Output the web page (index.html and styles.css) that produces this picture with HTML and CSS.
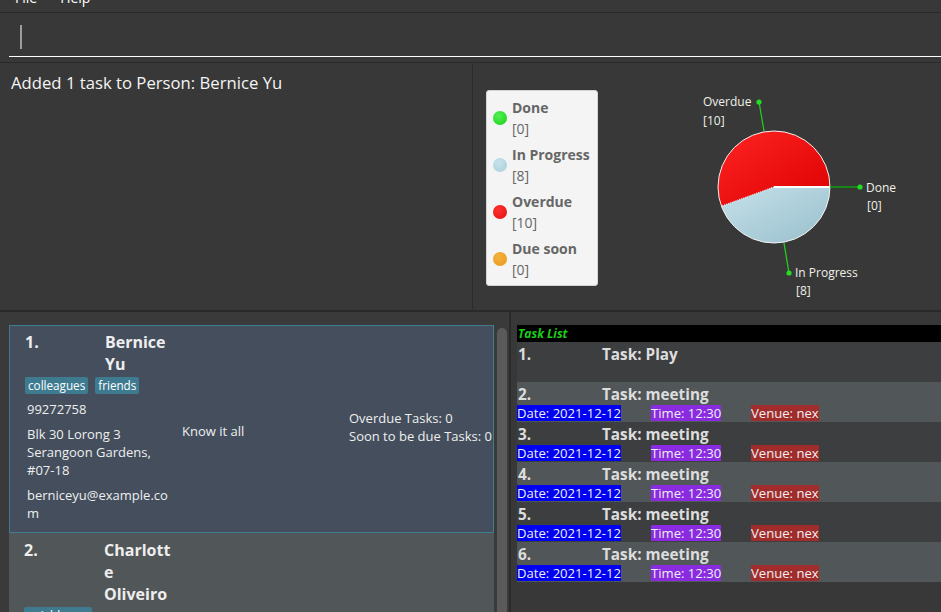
FILE: index.html
```html
<!DOCTYPE html>
<html>
<head>
<meta charset="utf-8">
<title>Address Book</title>
<link rel="stylesheet" href="styles.css">
</head>
<body>
<div class="app">
  <div class="menubar">
    <span class="menu-item">File</span>
    <span class="menu-item">Help</span>
  </div>
  <div class="command">
    <div class="command-field"><span class="caret"></span></div>
  </div>
  <div class="spacer"></div>
  <div class="top">
    <div class="result">Added 1 task to Person: Bernice Yu</div>
    <div class="chart">
      <div class="legend">
        <div class="legend-item">
          <span class="dot dot-done"></span>
          <div class="legend-text"><div class="legend-name">Done</div><div>[0]</div></div>
        </div>
        <div class="legend-item">
          <span class="dot dot-progress"></span>
          <div class="legend-text"><div class="legend-name">In Progress</div><div>[8]</div></div>
        </div>
        <div class="legend-item">
          <span class="dot dot-overdue"></span>
          <div class="legend-text"><div class="legend-name">Overdue</div><div>[10]</div></div>
        </div>
        <div class="legend-item">
          <span class="dot dot-soon"></span>
          <div class="legend-text"><div class="legend-name">Due soon</div><div>[0]</div></div>
        </div>
      </div>
      <svg class="pie" width="343" height="247" viewBox="0 0 343 247">
        <defs>
          <linearGradient id="gRed" x1="0" y1="0" x2="1" y2="1">
            <stop offset="0" stop-color="#ff2424"/>
            <stop offset="1" stop-color="#dc0000"/>
          </linearGradient>
          <linearGradient id="gBlue" x1="0" y1="0" x2="1" y2="1">
            <stop offset="0" stop-color="#c6e1ea"/>
            <stop offset="1" stop-color="#97bfcc"/>
          </linearGradient>
        </defs>
        <path d="M176,124 L232,124 A56,56 0 1,0 123.4,143.2 Z" fill="url(#gRed)"/>
        <path d="M176,124 L123.4,143.2 A56,56 0 0,0 232,124 Z" fill="url(#gBlue)"/>
        <circle cx="176" cy="124" r="56" fill="none" stroke="#f2f2f2" stroke-width="1"/>
        <line x1="176" y1="124" x2="232" y2="124" stroke="#ffffff" stroke-width="2"/>
        <line x1="176" y1="124" x2="123.4" y2="143.2" stroke="#f4f4f4" stroke-width="1.2" stroke-dasharray="1 1"/>
        <line x1="166" y1="68" x2="161" y2="39" stroke="#22cc22" stroke-width="1.3"/>
        <circle cx="161" cy="39" r="2.6" fill="#22dd22"/>
        <line x1="232" y1="124" x2="262" y2="124" stroke="#119911" stroke-width="1.6"/>
        <circle cx="262" cy="124" r="2.6" fill="#22dd22"/>
        <line x1="186" y1="180" x2="191" y2="210" stroke="#22cc22" stroke-width="1.3"/>
        <circle cx="191" cy="210" r="2.6" fill="#22dd22"/>
        <text class="pie-label" x="105" y="43">Overdue</text>
        <text class="pie-label" x="105" y="62">[10]</text>
        <text class="pie-label" x="268" y="129">Done</text>
        <text class="pie-label" x="269" y="147">[0]</text>
        <text class="pie-label" x="197" y="214">In Progress</text>
        <text class="pie-label" x="198" y="232">[8]</text>
      </svg>
    </div>
  </div>
  <div class="bottom">
    <div class="people">
      <div class="person-list">
        <div class="card selected">
          <div class="card-main">
            <div class="card-head">
              <div class="card-index">1.</div>
              <div class="card-name">Bernice Yu</div>
            </div>
            <div class="tags">
              <span class="tag">colleagues</span>
              <span class="tag">friends</span>
            </div>
            <div class="field phone">99272758</div>
            <div class="field">Blk 30 Lorong 3 Serangoon Gardens, #07-18</div>
            <div class="field">berniceyu@example.com</div>
          </div>
          <div class="card-remark">Know it all</div>
          <div class="card-stats">
            <div>Overdue Tasks: 0</div>
            <div>Soon to be due Tasks: 0</div>
          </div>
        </div>
        <div class="card">
          <div class="card-main">
            <div class="card-head">
              <div class="card-index">2.</div>
              <div class="card-name">Charlotte Oliveiro</div>
            </div>
            <div class="tags">
              <span class="tag">neighbours</span>
            </div>
          </div>
        </div>
      </div>
      <div class="scrollbar"><div class="thumb"></div></div>
    </div>
    <div class="tasks">
      <div class="task-header">Task List</div>
      <div class="task-row dark">
        <div class="task-title"><span class="task-index">1.</span><span>Task: Play</span></div>
      </div>
      <div class="task-row light">
        <div class="task-title"><span class="task-index">2.</span><span>Task: meeting</span></div>
        <div class="task-tags"><span class="t-date">Date: 2021-12-12</span><span class="t-time">Time: 12:30</span><span class="t-venue">Venue: nex</span></div>
      </div>
      <div class="task-row dark">
        <div class="task-title"><span class="task-index">3.</span><span>Task: meeting</span></div>
        <div class="task-tags"><span class="t-date">Date: 2021-12-12</span><span class="t-time">Time: 12:30</span><span class="t-venue">Venue: nex</span></div>
      </div>
      <div class="task-row light">
        <div class="task-title"><span class="task-index">4.</span><span>Task: meeting</span></div>
        <div class="task-tags"><span class="t-date">Date: 2021-12-12</span><span class="t-time">Time: 12:30</span><span class="t-venue">Venue: nex</span></div>
      </div>
      <div class="task-row dark">
        <div class="task-title"><span class="task-index">5.</span><span>Task: meeting</span></div>
        <div class="task-tags"><span class="t-date">Date: 2021-12-12</span><span class="t-time">Time: 12:30</span><span class="t-venue">Venue: nex</span></div>
      </div>
      <div class="task-row light">
        <div class="task-title"><span class="task-index">6.</span><span>Task: meeting</span></div>
        <div class="task-tags"><span class="t-date">Date: 2021-12-12</span><span class="t-time">Time: 12:30</span><span class="t-venue">Venue: nex</span></div>
      </div>
    </div>
  </div>
</div>
</body>
</html>
```
FILE: styles.css
```css
* { box-sizing: border-box; }
html, body {
  margin: 0;
  padding: 0;
  background: #383838;
  overflow: hidden;
}
body {
  font-family: "Open Sans", "DejaVu Sans", sans-serif;
  color: #eeeeee;
}
.app {
  width: 941px;
  height: 612px;
  display: flex;
  flex-direction: column;
  overflow: hidden;
}
.menubar {
  height: 13px;
  flex: none;
  border-bottom: 1px solid #2a2a2a;
  overflow: hidden;
  display: flex;
  padding-left: 15px;
  font-size: 14px;
  line-height: 20px;
  color: #ffffff;
}
.menu-item {
  margin-top: -12px;
  margin-right: 23px;
}
.command {
  height: 44px;
  flex: none;
  padding-left: 9px;
}
.command-field {
  height: 44px;
  border-bottom: 1px solid #ffffff;
  padding: 12px 0 0 11px;
}
.caret {
  display: block;
  width: 2px;
  height: 24px;
  background: #9c9c9c;
}
.spacer {
  height: 6px;
  flex: none;
  border-bottom: 1px solid #2a2a2a;
}
.top {
  height: 249px;
  flex: none;
  display: flex;
  border-bottom: 2px solid #2a2a2a;
}
.result {
  width: 473px;
  flex: none;
  border-right: 1px solid #2c2c2c;
  padding: 10px 11px;
  font-size: 16.7px;
  line-height: 20px;
  color: #f4f4f4;
}
.chart {
  flex: 1;
  display: flex;
  align-items: flex-start;
}
.legend {
  margin: 27px 0 0 13px;
  width: 112px;
  height: 196px;
  flex: none;
  background: #f4f4f4;
  border: 1px solid #d4d4d4;
  border-radius: 3px;
  padding: 6px 0 0 6px;
}
.legend-item {
  display: flex;
  align-items: center;
  gap: 5px;
  margin-bottom: 5px;
}
.dot {
  width: 14px;
  height: 14px;
  border-radius: 50%;
  flex: none;
}
.dot-done { background: radial-gradient(circle at 40% 35%, #55f055, #14d014); }
.dot-progress { background: radial-gradient(circle at 40% 35%, #c6e2ea, #a9cfdb); }
.dot-overdue { background: radial-gradient(circle at 40% 35%, #ff3030, #e01010); }
.dot-soon { background: radial-gradient(circle at 40% 35%, #f5b040, #e89a18); }
.legend-text {
  font-size: 14px;
  line-height: 21px;
  color: #666666;
}
.legend-name { font-weight: 700; }
.pie { flex: none; display: block; }
.pie-label {
  font-family: "Open Sans", sans-serif;
  font-size: 12px;
  fill: #f0f0e8;
}
.bottom {
  flex: 1;
  display: flex;
  min-height: 0;
}
.people {
  width: 511px;
  flex: none;
  display: flex;
  padding: 13px 0 0 9px;
  border-right: 2px solid #2a2a2a;
  background: #3a3a3a;
}
.person-list {
  width: 485px;
  flex: none;
}
.card {
  display: grid;
  grid-template-columns: 145px 155px 1fr;
  column-gap: 12px;
  align-items: center;
  background: #515658;
  padding: 6px 0 0 15px;
  font-size: 13px;
  line-height: 18px;
  color: #eeeeee;
}
.card.selected {
  background: #444e5d;
  border: 1px solid #3f7c92;
  padding: 5px 0 10px 15px;
}
.card-main { align-self: start; }
.card-head { display: flex; }
.card-index {
  width: 80px;
  flex: none;
  font-size: 16px;
  font-weight: 700;
  line-height: 22px;
}
.card-name {
  width: 70px;
  flex: none;
  font-size: 16px;
  font-weight: 700;
  line-height: 22px;
  overflow-wrap: anywhere;
}
.tags {
  display: flex;
  gap: 7px;
  margin-top: 2px;
}
.tag {
  background: #3e7b91;
  color: #ffffff;
  font-size: 11.7px;
  line-height: 15px;
  padding: 1px 3px;
  border-radius: 2px;
}
.field {
  margin-top: 7px;
  padding-left: 2px;
  overflow-wrap: anywhere;
}
.field.phone { margin-top: 6px; }
.card-remark { padding-top: 9px; }
.card-stats { white-space: nowrap; }
.scrollbar {
  width: 10px;
  margin-left: 3px;
  padding-top: 3px;
  display: flex;
  flex-direction: column;
}
.thumb {
  flex: 1;
  background: #5a5a5a;
  border-radius: 5px 5px 0 0;
}
.tasks {
  flex: 1;
  padding: 13px 0 0 6px;
}
.task-header {
  height: 17px;
  background: #000000;
  color: #1ccc1c;
  font-size: 12px;
  line-height: 17px;
  font-style: italic;
  font-weight: 700;
  padding-left: 1px;
}
.task-row {
  height: 40px;
  padding-top: 1px;
  color: #dddddd;
}
.task-row.dark { background: #3c3e3f; }
.task-row.light { background: #515658; }
.task-title {
  display: flex;
  font-size: 15.3px;
  font-weight: 700;
  line-height: 22px;
  padding-left: 1px;
}
.task-index {
  width: 84px;
  flex: none;
}
.task-tags {
  display: flex;
  gap: 30px;
  height: 16px;
  font-size: 13.1px;
  line-height: 16px;
  color: #f0f0f0;
  white-space: nowrap;
}
.t-date { background: #0000f2; width: 104px; }
.t-time { background: #8a2be2; width: 70px; }
.t-venue { background: #a02c2c; width: 68px; }
```
